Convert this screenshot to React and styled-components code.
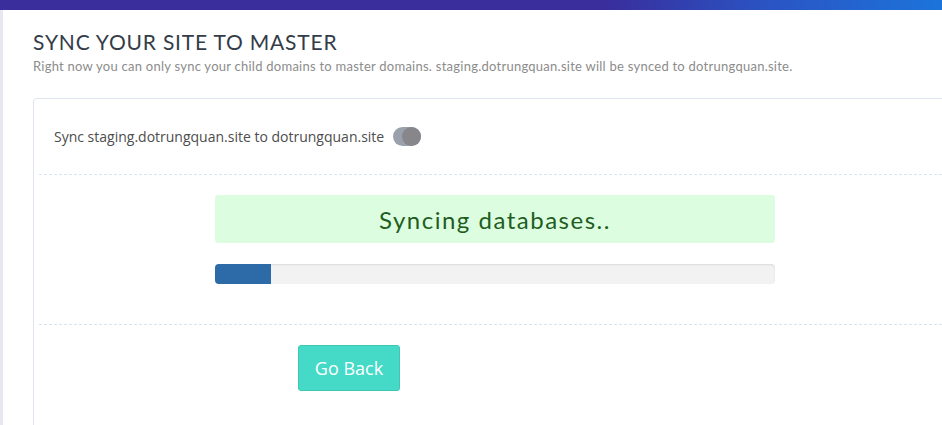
import styled, { createGlobalStyle } from 'styled-components';

const GlobalStyle = createGlobalStyle`
  html, body {
    margin: 0;
    padding: 0;
    background: #ffffff;
    overflow: hidden;
  }
  * {
    box-sizing: border-box;
  }
`;

export default function App() {
  const progress = 10;

  return (
    <>
      <GlobalStyle />
      <Page>
        <TopBar />
        <Body>
          <SideStrip />
          <Main>
            <Title>SYNC YOUR SITE TO MASTER</Title>
            <Subtitle>
              Right now you can only sync your child domains to master domains. staging.dotrungquan.site will be synced to dotrungquan.site.
            </Subtitle>
            <Panel>
              <SyncRow>
                <SyncLabel>Sync staging.dotrungquan.site to dotrungquan.site</SyncLabel>
                <Toggle>
                  <Knob />
                </Toggle>
              </SyncRow>
              <Divider />
              <ProgressSection>
                <StatusBox>Syncing databases..</StatusBox>
                <ProgressTrack>
                  <ProgressFill style={{ width: `${progress}%` }} />
                </ProgressTrack>
              </ProgressSection>
              <Divider />
              <Actions>
                <BackButton>Go Back</BackButton>
              </Actions>
            </Panel>
          </Main>
        </Body>
      </Page>
    </>
  );
}

const Page = styled.div`
  display: flex;
  flex-direction: column;
  width: 942px;
  height: 425px;
  overflow: hidden;
`;

const TopBar = styled.div`
  height: 10px;
  flex-shrink: 0;
  background: linear-gradient(90deg, #3a2d9c 0%, #3a2d9c 64%, #2a55c4 82%, #1c74db 100%);
`;

const Body = styled.div`
  display: flex;
  flex: 1;
  min-height: 0;
`;

const SideStrip = styled.div`
  width: 3px;
  flex-shrink: 0;
  background: #e7e7f2;
`;

const Main = styled.div`
  flex: 1;
  padding: 20px 0 0 30px;
  min-width: 0;
`;

const Title = styled.h1`
  margin: 0;
  font-family: Lato, "Open Sans", sans-serif;
  font-weight: 400;
  font-size: 21px;
  line-height: 24px;
  letter-spacing: 0.8px;
  color: #333c48;
`;

const Subtitle = styled.p`
  margin: 4px 0 0;
  font-family: Lato, "Open Sans", sans-serif;
  font-weight: 400;
  font-size: 13px;
  line-height: 16px;
  letter-spacing: 0.25px;
  color: #8c8c8c;
  white-space: nowrap;
`;

const Panel = styled.div`
  margin-top: 24px;
  width: 1000px;
  height: 400px;
  border: 1px solid #dfe5ee;
  border-radius: 4px;
`;

const SyncRow = styled.div`
  height: 75px;
  display: flex;
  align-items: center;
  gap: 9px;
  padding-left: 20px;
`;

const SyncLabel = styled.span`
  font-family: "Open Sans", sans-serif;
  font-size: 14px;
  color: #4d4d4d;
`;

const Toggle = styled.div`
  width: 28px;
  height: 19px;
  border-radius: 10px;
  background: #9aa1ad;
  display: flex;
  justify-content: flex-end;
`;

const Knob = styled.div`
  width: 19px;
  height: 19px;
  border-radius: 50%;
  background: #86868b;
`;

const Divider = styled.div`
  margin: 0 5px;
  border-top: 1px dashed #d9e4ef;
`;

const ProgressSection = styled.div`
  display: flex;
  flex-direction: column;
  gap: 21px;
  width: 741px;
  padding: 20px 0 40px 181px;
`;

const StatusBox = styled.div`
  height: 48px;
  display: flex;
  align-items: center;
  justify-content: center;
  background: #ddfde0;
  border-radius: 3px;
  font-family: Lato, "Open Sans", sans-serif;
  font-size: 24px;
  letter-spacing: 1.5px;
  color: #1f5d1f;
`;

const ProgressTrack = styled.div`
  height: 20px;
  background: #f2f2f2;
  border-radius: 4px;
  overflow: hidden;
  box-shadow: inset 0 1px 2px rgba(0, 0, 0, 0.1);
`;

const ProgressFill = styled.div`
  height: 100%;
  background: #2c6aa8;
`;

const Actions = styled.div`
  padding: 20px 0 0 264px;
`;

const BackButton = styled.button`
  width: 102px;
  height: 46px;
  border: 1px solid #3cc8b4;
  border-radius: 3px;
  background: #45d9c7;
  color: #ffffff;
  font-family: "Open Sans", sans-serif;
  font-size: 18px;
  cursor: pointer;
`;
